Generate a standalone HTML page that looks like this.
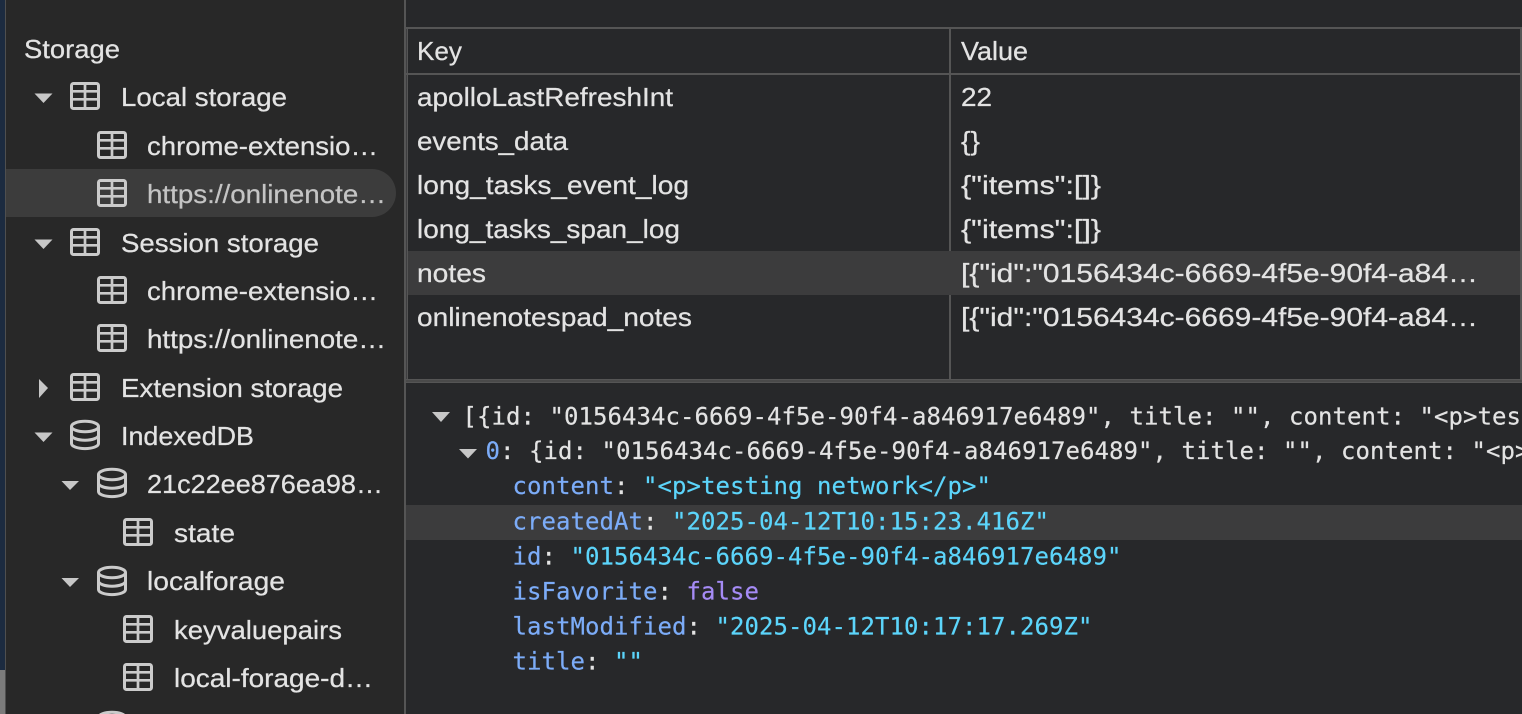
<!DOCTYPE html>
<html><head><meta charset="utf-8"><style>
html,body{margin:0;padding:0;background:#282828;width:1522px;height:714px;overflow:hidden}
svg{display:block}
.s{font:26px "Liberation Sans",sans-serif;fill:#e3e3e3;stroke:#e3e3e3;stroke-width:.25px}
.m{font:24px "DejaVu Sans Mono","Liberation Mono",monospace;fill:#e3e3e3;stroke:#e3e3e3;stroke-width:.2px;white-space:pre;letter-spacing:.05px}
.k{fill:#7cacf8;stroke:#7cacf8}.v{fill:#5cd5fb;stroke:#5cd5fb}.b{fill:#a58bf5;stroke:#a58bf5}
</style></head><body>
<svg width="1522" height="714" viewBox="0 0 1522 714" xmlns="http://www.w3.org/2000/svg">
<defs>
<symbol id="t" width="30" height="28" viewBox="0 0 30 28" overflow="visible">
<rect x="1.500" y="1.500" width="27" height="25" rx="2" fill="none" stroke="#cbcbcb" stroke-width="3"/>
<path d="M2 9.300H28M2 17.300H28M15 2V27" fill="none" stroke="#cbcbcb" stroke-width="2.700"/>
</symbol>
<symbol id="d" width="30" height="30" viewBox="0 0 30 30" overflow="visible">
<g fill="none" stroke="#cbcbcb" stroke-width="3">
<ellipse cx="15" cy="6.500" rx="13.500" ry="5.200"/>
<path d="M1.500 6.500V23.500C1.500 26.400 7.500 28.600 15 28.600S28.500 26.400 28.500 23.500V6.500"/>
<path d="M1.500 15C1.500 17.900 7.500 20.200 15 20.200S28.500 17.900 28.500 15"/>
</g>
</symbol>
</defs>
<rect width="1522" height="714" fill="#282828"/>
<rect x="0" y="0" width="5" height="670" fill="#1c2b40"/>
<rect x="0" y="670" width="5" height="44" fill="#7b7b7b"/>
<rect x="5" y="0" width="1" height="714" fill="#4f4f4f"/>
<rect x="6" y="169" width="366" height="48" fill="#3c3c3c"/>
<path d="M372 169A24 24 0 0 1 372 217Z" fill="#3c3c3c"/>

<rect x="406" y="0" width="1116" height="714" fill="#27282a"/>
<rect x="404" y="0" width="2" height="714" fill="#555"/>
<rect x="406" y="27" width="1116" height="2" fill="#555"/>
<rect x="406" y="73" width="1116" height="2" fill="#555"/>
<rect x="406.500" y="28" width="1.500" height="352" fill="#555"/>
<rect x="1520" y="28" width="2" height="352" fill="#555"/>
<rect x="949" y="28" width="2" height="352" fill="#555"/>
<rect x="408" y="251" width="1112" height="44" fill="#3c3c3d"/>
<rect x="406" y="379" width="1116" height="1.500" fill="#555"/>
<rect x="406" y="380.500" width="1116" height="1" fill="#3f3f3f"/>
<rect x="406" y="381.500" width="1116" height="1.500" fill="#555"/>
<rect x="406" y="505" width="1116" height="35" fill="#3c3c3d"/>

<!-- tree -->
<g class="s">
<text x="24" y="58" textLength="96" lengthAdjust="spacingAndGlyphs">Storage</text>
<text x="121" y="106" textLength="166" lengthAdjust="spacingAndGlyphs">Local storage</text>
<text x="147" y="155" textLength="231" lengthAdjust="spacingAndGlyphs">chrome-extensio…</text>
<text x="147" y="203" textLength="239" lengthAdjust="spacingAndGlyphs" style="fill:#c4c4c4;stroke:#c4c4c4">https://onlinenote…</text>
<text x="121" y="252" textLength="198" lengthAdjust="spacingAndGlyphs">Session storage</text>
<text x="147" y="300" textLength="231" lengthAdjust="spacingAndGlyphs">chrome-extensio…</text>
<text x="147" y="348" textLength="239" lengthAdjust="spacingAndGlyphs">https://onlinenote…</text>
<text x="121" y="397" textLength="222" lengthAdjust="spacingAndGlyphs">Extension storage</text>
<text x="121" y="445" textLength="133" lengthAdjust="spacingAndGlyphs">IndexedDB</text>
<text x="147" y="493" textLength="236" lengthAdjust="spacingAndGlyphs">21c22ee876ea98…</text>
<text x="174" y="542" textLength="61" lengthAdjust="spacingAndGlyphs">state</text>
<text x="147" y="590" textLength="138" lengthAdjust="spacingAndGlyphs">localforage</text>
<text x="174" y="639" textLength="168" lengthAdjust="spacingAndGlyphs">keyvaluepairs</text>
<text x="174" y="687" textLength="199" lengthAdjust="spacingAndGlyphs">local-forage-d…</text>
</g>
<use href="#t" x="70" y="82"/>
<use href="#t" x="97" y="131"/>
<use href="#t" x="97" y="179"/>
<use href="#t" x="70" y="228"/>
<use href="#t" x="97" y="276"/>
<use href="#t" x="97" y="324"/>
<use href="#t" x="70" y="373"/>
<use href="#d" x="70" y="420"/>
<use href="#d" x="97" y="468"/>
<use href="#t" x="123" y="518"/>
<use href="#d" x="97" y="566"/>
<use href="#t" x="123" y="615"/>
<use href="#t" x="123" y="663"/>
<use href="#d" x="97" y="711"/>
<g fill="#c7c7c7">
<path d="M34.500 93.500H52.500L43.500 103Z"/>
<path d="M34.500 239.500H52.500L43.500 249Z"/>
<path d="M39 379L48 388L39 398Z"/>
<path d="M34.500 432.500H52.500L43.500 442Z"/>
<path d="M61.500 481H79L70 490Z"/>
<path d="M61.500 578H79L70 587Z"/>
<path d="M432 412H450L441 422Z"/>
<path d="M459 449H477L468 458.500Z"/>
</g>

<!-- table -->
<g class="s">
<text x="417" y="60" textLength="45" lengthAdjust="spacingAndGlyphs">Key</text>
<text x="961" y="60" textLength="67" lengthAdjust="spacingAndGlyphs">Value</text>
<text x="417" y="106" textLength="256" lengthAdjust="spacingAndGlyphs">apolloLastRefreshInt</text>
<text x="417" y="150" textLength="151" lengthAdjust="spacingAndGlyphs">events_data</text>
<text x="417" y="194" textLength="272" lengthAdjust="spacingAndGlyphs">long_tasks_event_log</text>
<text x="417" y="238" textLength="263" lengthAdjust="spacingAndGlyphs">long_tasks_span_log</text>
<text x="417" y="282" textLength="69" lengthAdjust="spacingAndGlyphs">notes</text>
<text x="417" y="326" textLength="275" lengthAdjust="spacingAndGlyphs">onlinenotespad_notes</text>
<text x="961" y="106" textLength="31" lengthAdjust="spacingAndGlyphs">22</text>
<text x="961" y="150" textLength="19" lengthAdjust="spacingAndGlyphs">{}</text>
<text x="961" y="194" textLength="140" lengthAdjust="spacingAndGlyphs">{"items":[]}</text>
<text x="961" y="238" textLength="140" lengthAdjust="spacingAndGlyphs">{"items":[]}</text>
<text x="961" y="282" textLength="517" lengthAdjust="spacingAndGlyphs">[{"id":"0156434c-6669-4f5e-90f4-a84…</text>
<text x="961" y="326" textLength="517" lengthAdjust="spacingAndGlyphs">[{"id":"0156434c-6669-4f5e-90f4-a84…</text>
</g>

<!-- object viewer -->
<g class="m">
<text x="462.500" y="424.500">[{id: "0156434c-6669-4f5e-90f4-a846917e6489", title: "", content: "&lt;p&gt;testing network&lt;/p&gt;"</text>
<text x="485.500" y="459"><tspan class="k">0</tspan>: {id: "0156434c-6669-4f5e-90f4-a846917e6489", title: "", content: "&lt;p&gt;testing network&lt;/p&gt;"</text>
<text x="512.500" y="494"><tspan class="k">content</tspan>: <tspan class="v">"&lt;p&gt;testing network&lt;/p&gt;"</tspan></text>
<text x="512.500" y="529.500"><tspan class="k">createdAt</tspan>: <tspan class="v">"2025-04-12T10:15:23.416Z"</tspan></text>
<text x="512.500" y="564.500"><tspan class="k">id</tspan>: <tspan class="v">"0156434c-6669-4f5e-90f4-a846917e6489"</tspan></text>
<text x="512.500" y="599.500"><tspan class="k">isFavorite</tspan>: <tspan class="b">false</tspan></text>
<text x="512.500" y="634.500"><tspan class="k">lastModified</tspan>: <tspan class="v">"2025-04-12T10:17:17.269Z"</tspan></text>
<text x="512.500" y="669.500"><tspan class="k">title</tspan>: <tspan class="v">""</tspan></text>
</g>
</svg>
</body></html>
